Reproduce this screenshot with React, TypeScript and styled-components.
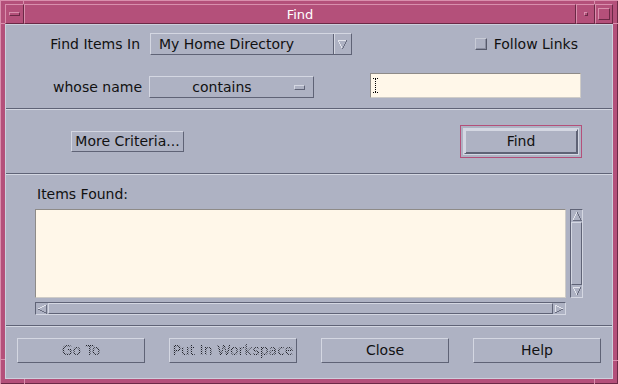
import * as React from "react";
import styled, { createGlobalStyle, css } from "styled-components";

const BG = "#aeb2c3";
const LIGHT = "#d4d7e2";
const DARK = "#5f6376";
const FIELD = "#fff7e9";
const FRAME = "#b4507a";
const FRAME_LIGHT = "#d98fad";
const FRAME_DARK = "#6b2946";

const GlobalStyle = createGlobalStyle`
  html, body {
    margin: 0;
    padding: 0;
    background: ${BG};
  }
  body {
    font-family: "DejaVu Sans", "Liberation Sans", sans-serif;
    font-size: 14px;
    line-height: 17px;
    color: #111;
  }
  * {
    box-sizing: border-box;
  }
`;

const raised = css`
  border: 1px solid;
  border-color: ${LIGHT} ${DARK} ${DARK} ${LIGHT};
`;

const sunkenField = css`
  border: 1px solid;
  border-color: #8e8b88 #cfccc7 #cfccc7 #8e8b88;
  background: ${FIELD};
`;

type Dir = "up" | "down" | "left" | "right";

const arrowLines: Record<Dir, { light: string; dark: string }> = {
  up: { light: "M5 1 L1 9", dark: "M1 9 L9 9 L5 1" },
  down: { light: "M5 9 L1 1 L9 1", dark: "M9 1 L5 9" },
  left: { light: "M9 1 L1 5", dark: "M1 5 L9 9 L9 1" },
  right: { light: "M1 9 L1 1 L9 5", dark: "M9 5 L1 9" },
};

const ArrowGlyph: React.FC<{ dir: Dir; size?: number }> = ({ dir, size = 10 }) => (
  <svg width={size} height={size} viewBox="0 0 10 10" shapeRendering="crispEdges">
    <path d={arrowLines[dir].light} stroke="#e2e4ec" strokeWidth="1" fill="none" />
    <path d={arrowLines[dir].dark} stroke="#6a6e80" strokeWidth="1" fill="none" />
  </svg>
);

const IBeam = () => (
  <svg width="5" height="15" viewBox="0 0 5 15" shapeRendering="crispEdges">
    <path d="M0 0.5 H5 M0 14.5 H5" stroke="#000" strokeWidth="1" strokeDasharray="1 1" />
    <path d="M2.5 1 V14" stroke="#000" strokeWidth="1" strokeDasharray="1 1" />
  </svg>
);

export default function App() {
  return (
    <>
      <GlobalStyle />
      <Window>
        <FrameNotch style={{ left: 23, top: 0, width: 1, height: 4 }} />
        <FrameNotch style={{ left: 594, top: 0, width: 1, height: 4 }} />
        <FrameNotch style={{ left: 24, top: 379, width: 1, height: 5 }} />
        <FrameNotch style={{ left: 594, top: 379, width: 1, height: 5 }} />
        <FrameNotch style={{ left: 0, top: 23, width: 5, height: 1 }} />
        <FrameNotch style={{ left: 613, top: 23, width: 5, height: 1 }} />
        <FrameNotch style={{ left: 0, top: 359, width: 5, height: 1 }} />
        <FrameNotch style={{ left: 613, top: 360, width: 5, height: 1 }} />

        <TitleBar>
          <TitleButton $width={19}>
            <MenuGlyph />
          </TitleButton>
          <TitleText>Find</TitleText>
          <TitleButton $width={19}>
            <MinGlyph />
          </TitleButton>
          <TitleButton $width={18}>
            <MaxGlyph />
          </TitleButton>
        </TitleBar>

        <Content>
          <CriteriaSection>
            <FormRow $height={22}>
              <FieldLabel $width={134} $gap={10}>
                Find Items In
              </FieldLabel>
              <OptionMenu $width={202}>
                <OptionText $align="left">My Home Directory</OptionText>
                <OptionArrowCell>
                  <ArrowGlyph dir="down" size={11} />
                </OptionArrowCell>
              </OptionMenu>
              <Spacer />
              <CheckRow>
                <CheckBox />
                <span>Follow Links</span>
              </CheckRow>
            </FormRow>
            <FormRow $height={25} $top={18} $bottom>
              <FieldLabel $width={136} $gap={7} $lift={2}>
                whose name
              </FieldLabel>
              <OptionMenu $width={165}>
                <OptionText $align="center">contains</OptionText>
                <CascadeMark />
              </OptionMenu>
              <TextField>
                <IBeam />
              </TextField>
            </FormRow>
          </CriteriaSection>

          <Separator />

          <ActionSection>
            <PushButton $width={113} $height={21}>
              More Criteria...
            </PushButton>
            <DefaultRing>
              <DefaultInset>
                <PushButton $width={114} $height={25} $thick>
                  Find
                </PushButton>
              </DefaultInset>
            </DefaultRing>
          </ActionSection>

          <Separator />

          <ResultsSection>
            <SectionLabel>Items Found:</SectionLabel>
            <ListGrid>
              <ListArea />
              <ScrollTrough $vertical>
                <ArrowCell $vertical>
                  <ArrowGlyph dir="up" />
                </ArrowCell>
                <Slider />
                <ArrowCell $vertical>
                  <ArrowGlyph dir="down" />
                </ArrowCell>
              </ScrollTrough>
              <ScrollTrough>
                <ArrowCell>
                  <ArrowGlyph dir="left" />
                </ArrowCell>
                <Slider />
                <ArrowCell>
                  <ArrowGlyph dir="right" />
                </ArrowCell>
              </ScrollTrough>
            </ListGrid>
          </ResultsSection>

          <Separator />

          <ButtonBar>
            <PushButton $width={128} $height={25}>
              <ButtonText $disabled>Go To</ButtonText>
            </PushButton>
            <PushButton $width={128} $height={25}>
              <ButtonText $disabled>Put In Workspace</ButtonText>
            </PushButton>
            <PushButton $width={128} $height={25}>
              <ButtonText>Close</ButtonText>
            </PushButton>
            <PushButton $width={128} $height={25}>
              <ButtonText>Help</ButtonText>
            </PushButton>
          </ButtonBar>
        </Content>
      </Window>
    </>
  );
}

const Window = styled.div`
  position: relative;
  width: 618px;
  height: 384px;
  background: ${FRAME};
  box-shadow: inset 1px 1px 0 ${FRAME_LIGHT}, inset -1px -1px 0 ${FRAME_DARK};
  padding: 4px 5px 5px 5px;
  display: flex;
  flex-direction: column;
`;

const FrameNotch = styled.div`
  position: absolute;
  background: ${FRAME_LIGHT};
`;

const TitleBar = styled.div`
  height: 20px;
  display: flex;
`;

const TitleButton = styled.div<{ $width: number }>`
  width: ${(p) => p.$width}px;
  flex: none;
  display: flex;
  align-items: center;
  justify-content: center;
  border: 1px solid;
  border-color: ${FRAME_LIGHT} ${FRAME_DARK} ${FRAME_DARK} ${FRAME_LIGHT};
`;

const TitleText = styled.div`
  flex: 1;
  display: flex;
  align-items: center;
  justify-content: center;
  border: 1px solid;
  border-color: ${FRAME_LIGHT} ${FRAME_DARK} ${FRAME_DARK} ${FRAME_LIGHT};
  color: #ffffff;
  font-size: 13px;
  padding-top: 1px;
`;

const MenuGlyph = styled.div`
  width: 11px;
  height: 4px;
  border: 1px solid;
  border-color: ${FRAME_LIGHT} ${FRAME_DARK} ${FRAME_DARK} ${FRAME_LIGHT};
`;

const MinGlyph = styled.div`
  width: 4px;
  height: 4px;
  border: 1px solid;
  border-color: ${FRAME_LIGHT} ${FRAME_DARK} ${FRAME_DARK} ${FRAME_LIGHT};
`;

const MaxGlyph = styled.div`
  width: 12px;
  height: 12px;
  border: 1px solid;
  border-color: ${FRAME_LIGHT} ${FRAME_DARK} ${FRAME_DARK} ${FRAME_LIGHT};
`;

const Content = styled.div`
  flex: 1;
  display: flex;
  flex-direction: column;
  background: ${BG};
  border: 1px solid #cdd0dc;
`;

const Separator = styled.div`
  height: 2px;
  flex: none;
  border-top: 1px solid ${DARK};
  border-bottom: 1px solid ${LIGHT};
`;

const CriteriaSection = styled.div`
  height: 83px;
  flex: none;
  padding: 8px 34px 0 0;
  display: flex;
  flex-direction: column;
`;

const FormRow = styled.div<{ $height: number; $top?: number; $bottom?: boolean }>`
  height: ${(p) => p.$height}px;
  margin-top: ${(p) => p.$top ?? 0}px;
  display: flex;
  align-items: ${(p) => (p.$bottom ? "flex-end" : "center")};
`;

const FieldLabel = styled.div<{ $width: number; $gap: number; $lift?: number }>`
  width: ${(p) => p.$width}px;
  margin-right: ${(p) => p.$gap}px;
  margin-bottom: ${(p) => p.$lift ?? 0}px;
  text-align: right;
  flex: none;
`;

const OptionMenu = styled.div<{ $width: number }>`
  ${raised};
  width: ${(p) => p.$width}px;
  height: 22px;
  flex: none;
  display: flex;
  align-items: center;
`;

const OptionText = styled.div<{ $align: "left" | "center" }>`
  flex: 1;
  text-align: ${(p) => p.$align};
  padding-left: ${(p) => (p.$align === "left" ? 8 : 0)}px;
`;

const OptionArrowCell = styled.div`
  width: 18px;
  height: 20px;
  flex: none;
  display: flex;
  align-items: center;
  justify-content: center;
  border-left: 1px solid ${DARK};
  box-shadow: inset 1px 0 0 ${LIGHT};
`;

const CascadeMark = styled.div`
  ${raised};
  width: 11px;
  height: 5px;
  margin-right: 8px;
  flex: none;
`;

const Spacer = styled.div`
  flex: 1;
`;

const CheckRow = styled.label`
  display: flex;
  align-items: center;
  gap: 7px;
`;

const CheckBox = styled.span`
  width: 12px;
  height: 12px;
  border: 1px solid;
  border-color: #c8cbd6 #565a6b #565a6b #c8cbd6;
  box-shadow: inset -1px -1px 0 #8a8ea0;
`;

const TextField = styled.div`
  ${sunkenField};
  width: 211px;
  height: 25px;
  margin-left: 56px;
  flex: none;
  display: flex;
  align-items: center;
  padding-left: 2px;
`;

const ActionSection = styled.div`
  height: 63px;
  flex: none;
  padding: 0 30px 0 65px;
  display: flex;
  align-items: center;
  justify-content: space-between;
`;

const PushButton = styled.div<{ $width: number; $height: number; $thick?: boolean }>`
  ${raised};
  width: ${(p) => p.$width}px;
  height: ${(p) => p.$height}px;
  display: flex;
  align-items: center;
  justify-content: center;
  white-space: nowrap;
  flex: none;
  ${(p) =>
    p.$thick &&
    css`
      box-shadow: inset 1px 1px 0 ${LIGHT}, inset -1px -1px 0 ${DARK};
    `}
`;

const DefaultRing = styled.div`
  border: 1px solid ${FRAME};
  padding: 2px;
`;

const DefaultInset = styled.div`
  border: 1px solid ${LIGHT};
`;

const ButtonText = styled.span<{ $disabled?: boolean }>`
  ${(p) =>
    p.$disabled &&
    css`
      color: transparent;
      background-image: repeating-conic-gradient(#22242c 0 25%, transparent 0 50%);
      background-size: 2px 2px;
      -webkit-background-clip: text;
      background-clip: text;
    `}
`;

const ResultsSection = styled.div`
  height: 150px;
  flex: none;
  padding: 11px 0 0 29px;
`;

const SectionLabel = styled.div`
  padding-left: 2px;
  margin-bottom: 6px;
`;

const ListGrid = styled.div`
  display: grid;
  grid-template-columns: 531px 13px;
  grid-template-rows: 89px 13px;
  column-gap: 4px;
  row-gap: 4px;
`;

const ListArea = styled.div`
  ${sunkenField};
`;

const ScrollTrough = styled.div<{ $vertical?: boolean }>`
  display: flex;
  flex-direction: ${(p) => (p.$vertical ? "column" : "row")};
  border: 1px solid;
  border-color: ${DARK} ${LIGHT} ${LIGHT} ${DARK};
  background: ${BG};
`;

const ArrowCell = styled.div<{ $vertical?: boolean }>`
  ${(p) => (p.$vertical ? "height: 12px;" : "width: 12px;")}
  flex: none;
  display: flex;
  align-items: center;
  justify-content: center;
`;

const Slider = styled.div`
  ${raised};
  flex: 1;
`;

const ButtonBar = styled.div`
  flex: 1;
  padding: 11px 11px 0;
  display: flex;
  gap: 24px;
`;
